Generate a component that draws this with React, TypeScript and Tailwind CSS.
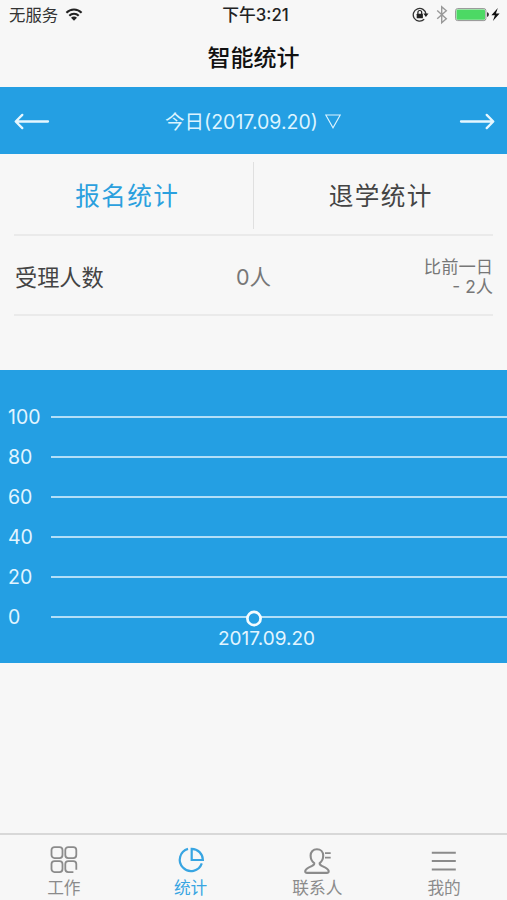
import React from "react";

const levels = [100, 80, 60, 40, 20, 0];

function StatusBar() {
  return (
    <div className="flex h-[30px] items-center justify-between pl-[9px] pr-[7px] text-[#333]">
      <div className="flex w-[180px] items-center gap-[7px]">
        <span className="text-[16.4px] leading-[30px]">无服务</span>
        <svg width="18" height="14" viewBox="0 0 18 14" fill="none" stroke="#222" strokeWidth="2">
          <path d="M1.4 4.7C5.6.4 12.4.4 16.6 4.7M4.3 7.7c2.6-2.7 6.8-2.7 9.4 0" />
          <path d="M9 12.7 6 9.7c1.6-1.6 4.4-1.6 6 0Z" fill="#222" stroke="none" />
        </svg>
      </div>
      <span className="pl-[2px] text-[16.8px] font-medium leading-[30px] text-[#222]">下午3:21</span>
      <div className="flex w-[180px] items-center justify-end">
        <svg width="88" height="20" viewBox="0 0 88 20" fill="none">
          <path d="M12.2 14.3A6.4 6.4 0 1 1 14 9" stroke="#333" strokeWidth="1.3" />
          <path d="M11.3 8.5h5.2l-2.6 3.4Z" fill="#222" />
          <rect x="4.7" y="8.7" width="6.2" height="4.5" rx=".5" fill="#222" />
          <path d="M5.9 9V7.4a1.9 1.9 0 0 1 3.8 0V9" stroke="#222" strokeWidth="1.2" />
          <path d="m25.2 5.6 9.1 8.1-4.6 4V1.8l4.6 4-9.1 8" stroke="#999" strokeWidth="1.4" />
          <rect x="43.6" y="3.6" width="30.3" height="12" rx="2" stroke="#929292" />
          <rect x="44.5" y="4.5" width="28.5" height="10.2" rx="1" fill="#4cd964" />
          <path d="M75 7.3c2.5.2 2.5 4.4 0 4.6Z" fill="#333" />
          <path d="m85.8 3-6.4 7.2h3.5l-2 5.8 6.7-7.4h-3.7Z" fill="#111" />
        </svg>
      </div>
    </div>
  );
}

function Arrow({ flip = false }: { flip?: boolean }) {
  return (
    <svg
      width="36"
      height="18"
      viewBox="0 0 36 18"
      fill="none"
      stroke="#e6f7ff"
      strokeWidth="2.3"
      strokeLinecap="round"
      strokeLinejoin="round"
      className={flip ? "-scale-x-100" : ""}
    >
      <path d="M34 8.5H2M8.3 1.9 1.7 8.5l6.6 6.6" />
    </svg>
  );
}

function Chart() {
  return (
    <section className="relative mt-[54px] h-[293px] bg-[#249fe3] pt-[27px] text-[#e2f5ff]">
      {levels.map((level) => (
        <div key={level} className="flex h-10 items-center pl-2">
          <span className="w-[43px] text-[19.5px] leading-10">{level}</span>
          <span className="h-[2px] flex-1 bg-[#b2dff8]" />
        </div>
      ))}
      <svg className="absolute left-[245px] top-[240px]" width="18" height="18" viewBox="0 0 18 18">
        <circle cx="9" cy="8.5" r="6.6" fill="#249fe3" stroke="#f4fcff" strokeWidth="2.7" />
      </svg>
      <div className="-mt-[9px] pl-[26px] text-center text-[19px] leading-[22px]">2017.09.20</div>
    </section>
  );
}

function NavItem({ label, active = false, children }: { label: string; active?: boolean; children: React.ReactNode }) {
  return (
    <div className={"flex flex-1 flex-col items-center pt-[10px] " + (active ? "text-[#38a5e2]" : "text-[#8b8b8b]")}>
      <svg className="shrink-0" width="30" height="30" viewBox="0 0 30 30" fill="none" stroke="currentColor" strokeWidth="1.8">
        {children}
      </svg>
      <span className="pl-px pt-px text-[16.7px] leading-[24px]">{label}</span>
    </div>
  );
}

export default function App() {
  return (
    <main className="flex h-[900px] w-[507px] flex-col overflow-hidden bg-[#f7f7f7] font-['Inter','Noto_Sans_CJK_SC',sans-serif]">
      <StatusBar />
      <h1 className="h-[57px] text-center text-[23px] font-medium leading-[57px] text-[#111]">智能统计</h1>

      <div className="flex h-[67px] items-center justify-between bg-[#249fe3] pl-[14px] pr-[12px] pt-[2px] text-[#dcf4ff]">
        <Arrow />
        <div className="flex items-center gap-[7px] pr-[3px]">
          <span className="text-[19.5px] leading-[40px]">今日(2017.09.20)</span>
          <svg width="16" height="16" viewBox="0 0 16 16" fill="none" stroke="currentColor" strokeWidth="1.1">
            <path d="M.8 1h14.4L8 13.8Z" />
          </svg>
        </div>
        <Arrow flip />
      </div>

      <div className="grid h-[80px] grid-cols-2 items-center pt-[2px] text-[24.6px] tracking-[1.4px]">
        <div className="h-[67px] border-r border-[#e0e0e0] pl-[2px] pt-[1px] text-center leading-[67px] text-[#2ba0de]">报名统计</div>
        <div className="h-[67px] pl-px pt-[1px] text-center leading-[67px] text-[#444]">退学统计</div>
      </div>

      <div className="mx-[14px] grid h-[82px] grid-cols-3 items-center border-y-2 border-[#eaeaea]">
        <span className="pl-px pt-[5px] text-[22.2px] text-[#444]">受理人数</span>
        <span className="pt-[4px] text-center text-[21.5px] text-[#777]">0人</span>
        <div className="pt-[4px] text-right text-[17.3px] leading-[20px] text-[#777]">
          <div>比前一日</div>
          <div>- 2人</div>
        </div>
      </div>

      <Chart />

      <nav className="mt-auto flex h-[67px] border-t-2 border-[#d8d8d8]">
        <NavItem label="工作">
          <g transform="translate(.8 -.6)">
            <rect x="2.7" y="2.7" width="11" height="11" rx="3" />
            <rect x="16.5" y="2.7" width="11" height="11" rx="3" />
            <rect x="2.7" y="16.7" width="11" height="11" rx="3" />
            <path d="M24.6 27.7h-5.1a3 3 0 0 1-3-3v-5a3 3 0 0 1 3-3h5a3 3 0 0 1 3 3v5.6" />
          </g>
        </NavItem>
        <NavItem label="统计" active>
          <g transform="translate(1 -.3)" strokeWidth="2.2">
            <path d="M12 4.2A11.3 11.3 0 1 0 25.8 18.7" />
            <path d="M15.7 4.2v11.1h11.2A11.2 11.2 0 0 0 15.7 4.2Z" />
          </g>
        </NavItem>
        <NavItem label="联系人">
          <path
            d="M12.2 18.1c-2.3-1.6-3.6-4.4-3.6-7.5 0-4 2.6-6.4 6.3-6.4s6.3 2.4 6.3 6.4c0 3.1-1.2 5.9-3.5 7.5-.4 1.5.5 2 2.1 2.8 3.4 1.7 6.2 2.9 6.8 4.8.4 1.3-.4 2.2-1.8 2.2H5.1c-1.4 0-2.2-.9-1.8-2.2.6-1.9 3.4-3.1 6.8-4.8 1.6-.8 2.5-1.3 2.1-2.8Z"
            strokeWidth="2.1"
          />
          <path d="M23 8.1h5.7M23 12.6h5.7" strokeWidth="1.7" />
        </NavItem>
        <NavItem label="我的">
          <path d="M2.8 7.7h24M2.8 16h24M2.8 24.5h24" strokeWidth="2.1" />
        </NavItem>
      </nav>
    </main>
  );
}
